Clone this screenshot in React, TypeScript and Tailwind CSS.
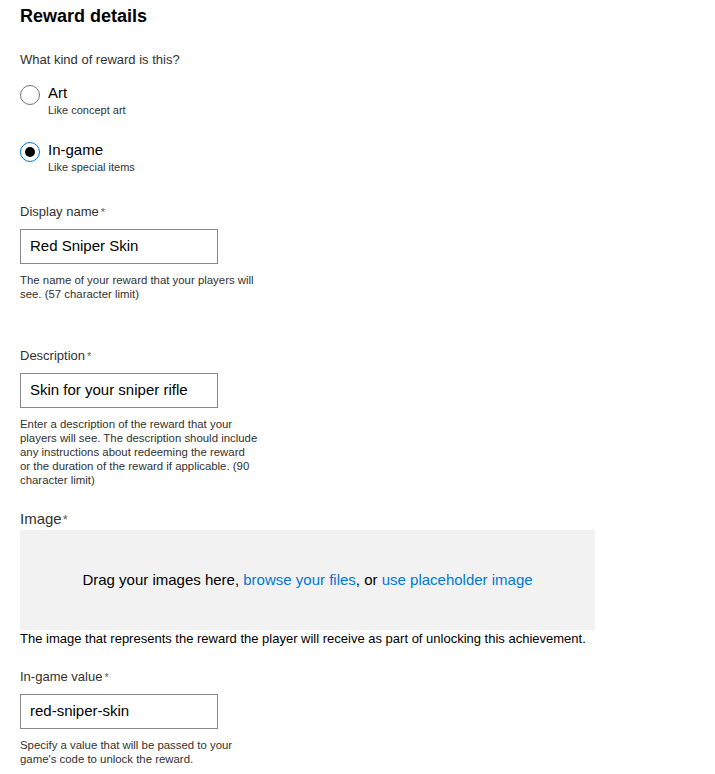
import React from "react";

function Radio({ label, sub, checked }: { label: string; sub: string; checked?: boolean }) {
  return (
    <div className="flex items-start gap-[8px]">
      <div
        className={
          "mt-[1px] flex h-[20px] w-[20px] shrink-0 items-center justify-center rounded-full border " +
          (checked ? "border-[#0078d4]" : "border-[#767676]")
        }
      >
        {checked && <div className="h-[10px] w-[10px] rounded-full bg-black" />}
      </div>
      <div className="flex flex-col">
        <span className="text-[15px] leading-[18px] text-black">{label}</span>
        <span className="text-[11px] leading-[16px] text-[#323130]">{sub}</span>
      </div>
    </div>
  );
}

function Field({ label, value, help }: { label: string; value: string; help: React.ReactNode }) {
  return (
    <div className="flex flex-col">
      <div className="text-[13px] leading-[18px] text-[#323130]">
        {label}
        <span className="ml-[2px] text-[11px] text-[#605e5c]">*</span>
      </div>
      <div className="mt-[8px] flex h-[35px] w-[198px] items-center border border-[#8a8886] px-[9px] text-[15px] text-black">
        {value}
      </div>
      <div className="mt-[9px] w-[260px] text-[11.4px] leading-[14px] text-[#323130]">{help}</div>
    </div>
  );
}

export default function App() {
  return (
    <div
      className="min-h-[774px] bg-white px-[20px] pt-[4px] text-[#323130]"
      style={{ fontFamily: '"Liberation Sans", Arial, sans-serif' }}
    >
      <h1 className="text-[18px] font-bold leading-[24px] text-black">Reward details</h1>
      <div className="mt-[23px] text-[13px] leading-[18px]">What kind of reward is this?</div>
      <div className="mt-[15px] flex flex-col gap-[23px]">
        <Radio label="Art" sub="Like concept art" />
        <Radio label="In-game" sub="Like special items" checked />
      </div>
      <div className="mt-[28px]">
        <Field
          label="Display name"
          value="Red Sniper Skin"
          help={
            <>
              The name of your reward that your players will
              <br />
              see. (57 character limit)
            </>
          }
        />
      </div>
      <div className="mt-[46px]">
        <Field
          label="Description"
          value="Skin for your sniper rifle"
          help={
            <>
              Enter a description of the reward that your
              <br />
              players will see. The description should include
              <br />
              any instructions about redeeming the reward
              <br />
              or the duration of the reward if applicable. (90
              <br />
              character limit)
            </>
          }
        />
      </div>
      <div className="mt-[22px] text-[15px] leading-[20px]">
        Image<span className="ml-[1px] text-[13px] text-[#605e5c]">*</span>
      </div>
      <div className="flex h-[100px] w-[575px] items-center justify-center bg-[#f2f2f2] text-[15px] text-black">
        <span>
          Drag your images here, <span className="text-[#0078d4]">browse your files</span>, or{" "}
          <span className="text-[#0078d4]">use placeholder image</span>
        </span>
      </div>
      <div className="text-[13px] leading-[18px] text-black">
        The image that represents the reward the player will receive as part of unlocking this achievement.
      </div>
      <div className="mt-[20px]">
        <Field
          label="In-game value"
          value="red-sniper-skin"
          help={
            <>
              Specify a value that will be passed to your
              <br />
              game's code to unlock the reward.
            </>
          }
        />
      </div>
    </div>
  );
}
